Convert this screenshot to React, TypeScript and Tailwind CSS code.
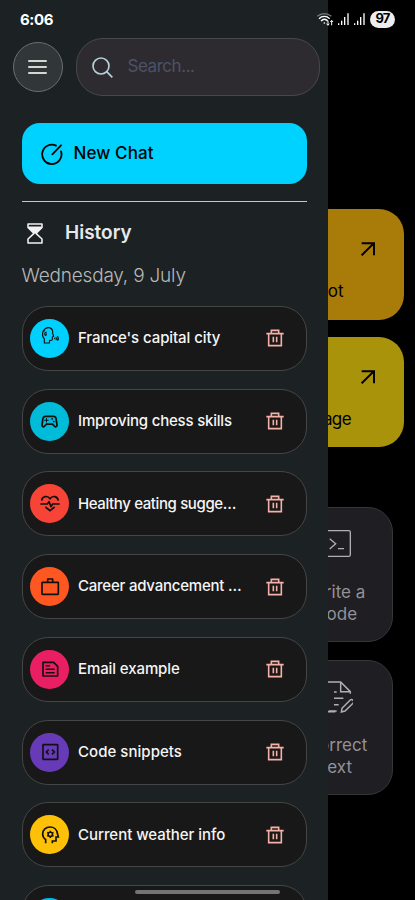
import React from "react";
import { MdOutlineSportsEsports } from "react-icons/md";

interface HistoryItem {
  title: string;
  tracking: string;
  color: string;
  icon: React.ReactNode;
}

const Glyph: React.FC<{ children: React.ReactNode; width?: number }> = ({
  children,
  width = 5,
}) => (
  <svg
    className="h-5 w-5 overflow-visible"
    viewBox="0 0 60 60"
    fill="none"
    stroke="currentColor"
    strokeWidth={width}
  >
    {children}
  </svg>
);

const SpeakingHeadIcon = () => (
  <Glyph width={3.4}>
    <path d="M13 45V33C8 28 7 21 8 14C10 3 20 -2 28 -1C36 1 39 7 38 16L41 25L37 27V34C37 37 34 38 29 37L28 45Z" />
    <path d="M20 13C15 12 13 17 15 20C16 22 18 21 18 24M20 17L18 20M10 12L14 7" />
    <path d="M44 29V34M48 27C50 30 50 33 48 36M52 24C56 29 56 34 52 38" />
  </Glyph>
);

const HeartPulseIcon = () => (
  <Glyph>
    <path d="M5 20C6 7 22 3 30 14C38 3 53 7 55 20" />
    <path d="M1 30H22L27 23L33 38L38 30H59" strokeLinejoin="round" />
    <path d="M16 39L30 50L44 39" />
  </Glyph>
);

const BriefcaseIcon = () => (
  <Glyph>
    <rect x="6" y="16" width="49" height="36" rx="1.5" />
    <path d="M23 16V6H38V16" strokeLinejoin="round" />
  </Glyph>
);

const DocumentIcon = () => (
  <Glyph>
    <path d="M9 10H41L53 22V51H9Z" strokeLinejoin="round" />
    <path d="M17 20H30M17 30.5H44M17 41H44" strokeWidth={4.6} />
  </Glyph>
);

const CodeIcon = () => (
  <Glyph>
    <rect x="9" y="8" width="44" height="44" rx="1" />
    <path d="M26 23L19 30L26 37M36 23L43 30L36 37" />
  </Glyph>
);

const MindIcon = () => (
  <Glyph>
    <path d="M17 55V44C10 39 8 33 8 27C8 14 18 6 30 6C42 6 51 14 52 25L55 36H48V48H37V55" />
    <circle cx="31" cy="28" r="6.5" strokeWidth={4.5} />
    <path
      d="M31 17V21M31 35V39M21.5 22.5L25 24.5M37 31.5L40.5 33.5M21.5 33.5L25 31.5M37 24.5L40.5 22.5"
      strokeWidth={4.5}
    />
  </Glyph>
);

const TrashIcon = () => (
  <svg
    className="h-[18px] w-[18px] shrink-0 text-[#f5b0a7]"
    viewBox="0 0 54 54"
    fill="none"
    stroke="currentColor"
    strokeWidth={4.8}
  >
    <path d="M1 14H53M16 14V4H38V14M8 14V50H46V14M22 23V40M32 23V40" />
  </svg>
);

const ArrowIcon = () => (
  <svg
    className="h-[14px] w-[14px]"
    viewBox="0 0 42 42"
    fill="none"
    stroke="currentColor"
    strokeWidth={6}
  >
    <path d="M2 3.5H39V40M38 4L2 40" />
  </svg>
);

const HISTORY: HistoryItem[] = [
  {
    title: "France's capital city",
    tracking: "tracking-[-0.08px]",
    color: "bg-[#00d0ff]",
    icon: <SpeakingHeadIcon />,
  },
  {
    title: "Improving chess skills",
    tracking: "tracking-[-0.2px]",
    color: "bg-[#00bcd8]",
    icon: <MdOutlineSportsEsports className="h-[21px] w-[21px]" />,
  },
  {
    title: "Healthy eating sugge…",
    tracking: "tracking-[-0.38px]",
    color: "bg-[#f74437]",
    icon: <HeartPulseIcon />,
  },
  {
    title: "Career advancement …",
    tracking: "tracking-[-0.22px]",
    color: "bg-[#ff5722]",
    icon: <BriefcaseIcon />,
  },
  {
    title: "Email example",
    tracking: "tracking-[-0.1px]",
    color: "bg-[#ea1e63]",
    icon: <DocumentIcon />,
  },
  {
    title: "Code snippets",
    tracking: "tracking-[0.04px]",
    color: "bg-[#673bb7]",
    icon: <CodeIcon />,
  },
  {
    title: "Current weather info",
    tracking: "tracking-[-0.04px]",
    color: "bg-[#ffc107]",
    icon: <MindIcon />,
  },
  { title: "", tracking: "", color: "bg-[#00bcf0]", icon: null },
];

const HistoryRow: React.FC<{ item: HistoryItem }> = ({ item }) => (
  <div className="flex h-[65px] shrink-0 items-center rounded-[26px] border border-[#454545] bg-[#181818] pl-[7.5px] pr-[22px]">
    <div
      className={`flex h-[39px] w-[39px] shrink-0 items-center justify-center rounded-full text-[#111] ${item.color}`}
    >
      {item.icon}
    </div>
    <span
      className={`ml-[9px] flex-1 whitespace-nowrap text-[15px] font-[480] text-[#f5f5f5] ${item.tracking}`}
    >
      {item.title}
    </span>
    <TrashIcon />
  </div>
);

const SignalIcon = () => (
  <svg className="h-3 w-[11px]" viewBox="0 0 33 36" fill="currentColor">
    <path d="M0 31h4v5H0zM9 23h4v13H9zM18 12h4v24h-4zM28 1h4v35h-4z" />
  </svg>
);

const StatusBar = () => (
  <div className="absolute inset-x-0 top-0 flex h-[38px] items-center pl-5 pr-5 text-white">
    <span className="text-[15px] font-bold leading-none tracking-[-0.4px]">
      6:06
    </span>
    <div className="ml-auto flex items-center">
      <svg
        className="mr-1 h-[13px] w-[17px] overflow-visible"
        viewBox="0 0 51 39"
        fill="none"
        stroke="currentColor"
        strokeWidth={4}
      >
        <path d="M1 10C13 -1 31 -1 43 10" stroke="#777" />
        <path d="M6 17C15 8 29 8 38 17M12 24C19 17 26 17 32 24" />
        <circle cx="22" cy="30" r="2.5" fill="currentColor" stroke="none" />
        <path
          d="M33 23V36M29 32L33 37L37 32M44 37V23M40 27L44 22L48 27"
          strokeWidth={3}
        />
      </svg>
      <SignalIcon />
      <div className="ml-[5px] mr-[5px]">
        <SignalIcon />
      </div>
      <span className="flex h-[17px] w-[25px] items-center justify-center rounded-full bg-[#eee] text-[13px] font-bold tracking-[-0.8px] text-black">
        97
      </span>
    </div>
  </div>
);

const HomeScreen = () => (
  <div className="flex h-full flex-col items-end pt-[209px] text-black">
    <div className="mr-[11px] flex h-[110.5px] w-[190px] flex-col items-end rounded-[25px] bg-[#a97b09] pt-[33px]">
      <div className="mr-[29.5px]">
        <ArrowIcon />
      </div>
      <span className="mr-[60.5px] mt-[23px] text-[17px] leading-6">
        Chatbot
      </span>
    </div>
    <div className="mr-[11px] mt-[17px] flex h-[110.5px] w-[190px] flex-col items-end rounded-[25px] bg-[#a9930a] pt-[33px]">
      <div className="mr-[29.5px]">
        <ArrowIcon />
      </div>
      <span className="mr-[53px] mt-[23px] text-[17px] leading-6 tracking-[-0.6px]">
        Image
      </span>
    </div>

    <div className="mr-[22px] mt-[60px] flex h-[135px] w-[112px] flex-col items-center rounded-[25px] border border-[#363638] bg-[#1f1e22] pt-[22px] text-[#929298]">
      <svg
        className="mr-1 h-[27px] w-[31px] text-[#b0b0b0]"
        viewBox="0 0 93 81"
        fill="none"
        stroke="currentColor"
        strokeWidth={4}
      >
        <rect x="2" y="2" width="89" height="77" rx="5" />
        <path d="M29 26L47 41L29 57M54 56H72" />
      </svg>
      <p className="mt-6 text-center text-[17px] leading-[22px]">
        Write a
        <br />
        code
      </p>
    </div>

    <div className="mr-[22px] mt-[18px] flex h-[135px] w-[112px] flex-col items-center rounded-[25px] border border-[#363638] bg-[#1f1e22] pt-[20px] text-[#929298]">
      <svg
        className="h-[33px] w-[31px] text-[#b0b0b0]"
        viewBox="0 0 93 99"
        fill="none"
        stroke="currentColor"
        strokeWidth={4.4}
      >
        <path d="M40 92H2V3H56L85 32V38M56 3V32H85" />
        <path d="M36 33H44M36 52H64M36 71H50M20 90H44" />
        <path d="M60 82L84 58C90 52 99 60 93 67L69 90L58 93Z" />
      </svg>
      <p className="mt-5 text-center text-[17px] leading-[22px]">
        Correct
        <br />
        text
      </p>
    </div>
  </div>
);

const Drawer = () => (
  <aside className="absolute inset-y-0 left-0 flex w-[328.4px] flex-col overflow-hidden bg-[#1c2123] pt-[38px]">
    <div className="flex items-center pl-[13px]">
      <button
        type="button"
        className="flex h-[49.5px] w-[49.5px] shrink-0 items-center justify-center rounded-full border border-[#6b6f71] bg-[#313638]"
      >
        <svg
          className="h-4 w-[19px]"
          viewBox="0 0 57 48"
          fill="none"
          stroke="#d5d7d2"
          strokeWidth={6}
          strokeLinecap="round"
        >
          <path d="M3 6H54M3 24H54M3 42H54" />
        </svg>
      </button>
      <div className="ml-[13px] flex h-[58px] w-[244.5px] items-center rounded-[27px] border border-[#48484a] bg-[#2d2b30] pl-[15px]">
        <svg
          className="h-[21px] w-[21px]"
          viewBox="0 0 63 63"
          fill="none"
          stroke="#b5d0da"
          strokeWidth={5}
        >
          <circle cx="27" cy="27" r="24" />
          <path d="M44 44L61 61" />
        </svg>
        <span className="ml-[15px] text-[17px] tracking-[-0.45px] text-[#4b5268]">
          Search...
        </span>
      </div>
    </div>

    <div className="flex w-[307px] flex-col pl-[21.5px] pt-[27px]">
      <button
        type="button"
        className="flex h-[61px] items-center rounded-[18px] bg-[#00d2ff] pl-[19px] text-black"
      >
        <svg
          className="h-[22px] w-[22px]"
          viewBox="0 0 66 66"
          fill="none"
          stroke="currentColor"
          strokeWidth={5.5}
          strokeLinecap="round"
        >
          <path d="M45 8A29 29 0 1 0 60 25M34 34L60 7" />
        </svg>
        <span className="ml-[11px] text-[17px] font-[450] tracking-[0.1px]">
          New Chat
        </span>
      </button>

      <div className="mt-[17px] h-[1.4px] bg-[#c5c7c8]" />

      <div className="mt-[17.1px] flex h-7 items-center pl-[5px]">
        <svg
          className="h-[21px] w-4"
          viewBox="0 0 48 63"
          fill="none"
          stroke="#f2f2f2"
          strokeWidth={4.6}
          strokeLinejoin="round"
        >
          <path d="M3 3H45V13L27 31L45 48V60H3V48L21 31L3 13Z" />
          <path d="M5 13H43L24 30Z" fill="#f2f2f2" />
        </svg>
        <h2 className="ml-[22.5px] text-[19px] font-semibold text-[#e7e9ea]">
          History
        </h2>
      </div>
      <p className="mt-[14.5px] text-[19px] font-[330] leading-7 tracking-[-0.2px] text-[#b7b9ba]">
        Wednesday, 9 July
      </p>

      <div className="mt-4 flex flex-col gap-[17.75px]">
        {HISTORY.map((item, index) => (
          <HistoryRow key={index} item={item} />
        ))}
      </div>
    </div>
  </aside>
);

const App: React.FC = () => (
  <div className="relative h-[900px] w-[415px] overflow-hidden bg-black font-['Inter',sans-serif]">
    <HomeScreen />
    <Drawer />
    <StatusBar />
    <div className="absolute bottom-[6px] left-[135px] h-1 w-[145px] rounded-full bg-[#747474]" />
  </div>
);

export default App;
